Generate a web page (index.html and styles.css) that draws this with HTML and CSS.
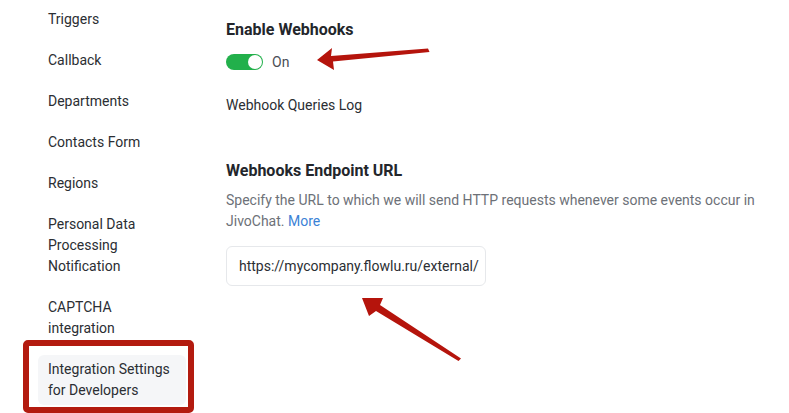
FILE: index.html
```html
<!DOCTYPE html>
<html lang="en">
<head>
<meta charset="utf-8">
<title>Integration Settings for Developers</title>
<link rel="stylesheet" href="styles.css">
</head>
<body>
<div class="page">
  <nav class="sidebar">
    <a class="nav-item">Triggers</a>
    <a class="nav-item">Callback</a>
    <a class="nav-item">Departments</a>
    <a class="nav-item">Contacts Form</a>
    <a class="nav-item">Regions</a>
    <a class="nav-item">Personal Data Processing Notification</a>
    <a class="nav-item">CAPTCHA integration</a>
    <a class="nav-item active">Integration Settings for Developers</a>
  </nav>
  <main class="content">
    <h2 class="title">Enable Webhooks</h2>
    <div class="toggle-row">
      <span class="toggle"><span class="knob"></span></span>
      <span class="toggle-label">On</span>
    </div>
    <div class="log-link">Webhook Queries Log</div>
    <h2 class="title title-second">Webhooks Endpoint URL</h2>
    <p class="desc">Specify the URL to which we will send HTTP requests whenever some events occur in JivoChat. <a class="more">More</a></p>
    <div class="url-input">https://mycompany.flowlu.ru/external/</div>
  </main>
</div>
<div class="highlight-box"></div>
<svg class="annotations" width="789" height="413" viewBox="0 0 789 413">
  <polygon points="317,60 332,48 331,56 428,48.5 429.5,52 333,61.5 334,70" />
  <polygon points="362,298 383,298 380,305 461,358.5 458.5,361 376,311 369,316" />
</svg>
</body>
</html>
```

FILE: styles.css
```css
* { box-sizing: border-box; }
html, body {
  margin: 0;
  padding: 0;
  background: #ffffff;
  overflow: hidden;
}
body {
  font-family: Roboto, "Noto Sans", Arial, sans-serif;
  color: #2b2e33;
  width: 789px;
  height: 413px;
  position: relative;
}
.page {
  display: flex;
  align-items: flex-start;
}
.sidebar {
  width: 226px;
  flex: none;
  padding: 5px 40px 0 38px;
  display: flex;
  flex-direction: column;
  gap: 12px;
}
.nav-item {
  display: block;
  font-size: 14px;
  line-height: 21px;
  padding: 4px 10px;
  color: #2b2e33;
  border-radius: 6px;
}
.nav-item.active {
  background: #f5f6f8;
}
.content {
  flex: 1;
  padding: 18px 20px 0 0;
  display: flex;
  flex-direction: column;
  align-items: flex-start;
}
.title {
  margin: 0;
  font-size: 16px;
  line-height: 24px;
  font-weight: 700;
  color: #23262b;
}
.title-second {
  margin-top: 43px;
}
.toggle-row {
  margin-top: 10px;
  height: 20px;
  display: flex;
  align-items: center;
  gap: 9px;
}
.toggle {
  width: 37px;
  height: 16px;
  border-radius: 8px;
  background: #22b04b;
  display: flex;
  align-items: center;
  justify-content: flex-end;
  padding: 0 1px;
}
.knob {
  width: 14px;
  height: 14px;
  border-radius: 50%;
  background: #ffffff;
}
.toggle-label {
  font-size: 14px;
  color: #4a4e55;
}
.log-link {
  margin-top: 23px;
  font-size: 14px;
  line-height: 21px;
  color: #2b2e33;
}
.desc {
  margin: 7px 0 0;
  max-width: 545px;
  font-size: 14px;
  line-height: 21px;
  color: #6d7178;
}
.more {
  color: #3b82d6;
}
.url-input {
  margin-top: 14px;
  width: 260px;
  height: 40px;
  border: 1px solid #e6e8eb;
  border-radius: 6px;
  padding: 0 12px;
  display: flex;
  align-items: center;
  font-size: 14px;
  color: #2b2e33;
  white-space: nowrap;
  overflow: hidden;
}
.highlight-box {
  position: absolute;
  left: 23px;
  top: 340px;
  width: 171px;
  height: 73px;
  border: 6px solid #b31b0f;
  border-radius: 5px;
}
.annotations {
  position: absolute;
  left: 0;
  top: 0;
  pointer-events: none;
}
.annotations polygon {
  fill: #b5140c;
}
```
